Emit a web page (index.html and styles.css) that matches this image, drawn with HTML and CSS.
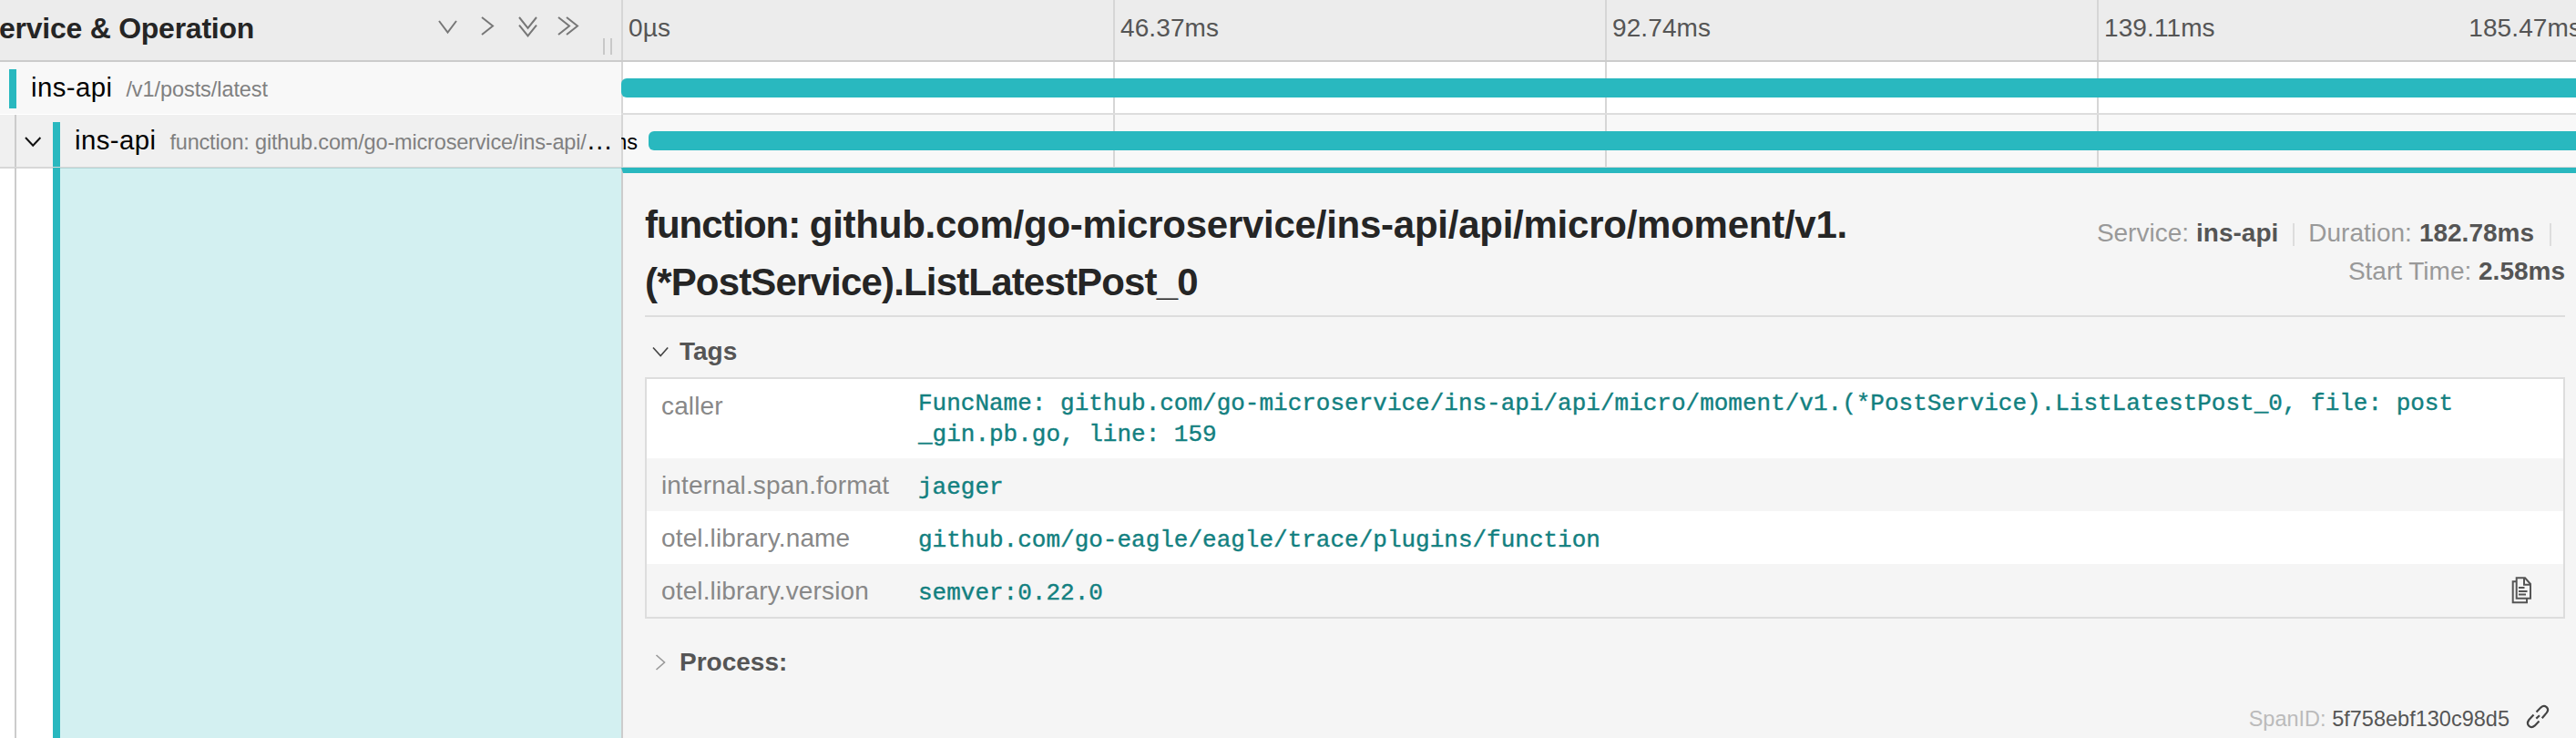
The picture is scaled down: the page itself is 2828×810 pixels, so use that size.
FILE: index.html
```html
<!DOCTYPE html>
<html lang="en">
<head>
<meta charset="utf-8">
<title>Trace timeline</title>
<link rel="stylesheet" href="styles.css">
</head>
<body>
<header class="row header">
  <div class="name-col header-name">
    <h3 class="header-title">ervice &amp; Operation</h3>
    <div class="collapsers">
      <svg class="icon" width="24" height="28"><path d="M2 6L11.5 18.5L21 6"/></svg>
      <svg class="icon" width="24" height="28"><path d="M5 2L17 11.5L5 21"/></svg>
      <svg class="icon" width="24" height="28"><path d="M2 2L11.5 13.8L21 2M2 10.7L11.5 22.5L21 10.7"/></svg>
      <svg class="icon" width="24" height="28"><path d="M1 2L13 11.5L1 21M10 2L22 11.5L10 21"/></svg>
    </div>
    <div class="grip"></div>
  </div>
  <div class="ticks">
    <div class="tick">0µs</div>
    <div class="tick">46.37ms</div>
    <div class="tick">92.74ms</div>
    <div class="tick tick-last"><span>139.11ms</span><span>185.47ms</span></div>
  </div>
</header>

<div class="row span-row">
  <div class="name-col span-name root">
    <i class="swatch"></i>
    <span class="label"><span class="service">ins-api</span><small class="endpoint path">/v1/posts/latest</small></span>
  </div>
  <div class="ticks view">
    <div class="tick"></div><div class="tick"></div><div class="tick"></div><div class="tick"></div>
    <div class="bar"></div>
  </div>
</div>

<div class="row span-row selected">
  <div class="name-col span-name">
    <i class="guide"></i>
    <svg class="icon toggle" width="20" height="20"><path d="M2 5L10.2 13.8L18.4 5"/></svg>
    <i class="swatch"></i>
    <span class="label"><span class="service">ins-api</span><small class="endpoint">function: github.com/go-microservice/ins-api/</small>…</span>
  </div>
  <div class="ticks view">
    <div class="tick"></div><div class="tick"></div><div class="tick"></div><div class="tick"></div>
    <div class="bar child"><span class="bar-label">182.78ms</span></div>
  </div>
</div>

<div class="row detail-row">
  <div class="name-col detail-gutter">
    <i class="guide"></i>
    <i class="swatch"></i>
    <div class="tint"></div>
  </div>
  <main class="detail">
    <div class="detail-head">
      <h2 class="detail-title"><span class="title-kind">function: </span><span class="title-a">github.com/go-microservice/ins-api/api/micro/moment/v1.</span><br><span class="title-b">(*PostService).ListLatestPost_0</span></h2>
      <div class="summary">
        <div class="summary-line first">
          <div class="item"><span>Service:</span> <strong>ins-api</strong></div>
          <div class="item"><span>Duration:</span> <strong>182.78ms</strong></div>
        </div>
        <div class="summary-line"><div>Start Time: <strong>2.58ms</strong></div></div>
      </div>
    </div>

    <div class="section tags">
      <svg class="icon dark" width="20" height="20"><path d="M2 5.5L10.2 14.5L18.2 5.5"/></svg>
      <strong>Tags</strong>
    </div>
    <div class="table">
      <div class="tr tall"><div class="key">caller</div><div class="value">FuncName: github.com/go-microservice/ins-api/api/micro/moment/v1.(*PostService).ListLatestPost_0, file: post<br>_gin.pb.go, line: 159</div></div>
      <div class="tr"><div class="key">internal.span.format</div><div class="value">jaeger</div></div>
      <div class="tr"><div class="key">otel.library.name</div><div class="value">github.com/go-eagle/eagle/trace/plugins/function</div></div>
      <div class="tr"><div class="key">otel.library.version</div><div class="value">semver:0.22.0</div>
        <svg class="icon copy" width="24" height="30"><path d="M5.7 1.3H15L21 8V23.8H5.7ZM14 1.3V8.8H21M8 12H14.5M8 16H17.5M8 19.5H16M5.7 5.2H1.7V28.2H17V24"/></svg>
      </div>
    </div>

    <div class="section process">
      <svg class="icon" width="20" height="20"><path d="M5.5 2L14.5 10L5.5 18"/></svg>
      <strong>Process:</strong>
    </div>

    <div class="debug">
      <span><span class="debug-label">SpanID:</span> 5f758ebf130c98d5</span>
      <svg class="icon link" width="28" height="28"><path d="M12.5 9.5L17.3 4.6C22 .5 27.5 5.5 23.7 10.4L18.7 16.2M9.5 12.5L4.4 18C.5 23.5 6 28.5 10.8 24.4L15.5 19.4M12.3 16.6L16 13.2"/></svg>
    </div>
  </main>
</div>
</body>
</html>
```
FILE: styles.css
```css
* { box-sizing: border-box; }

body {
  margin: 0;
  width: 2828px;
  height: 810px;
  overflow: hidden;
  background: #fff;
  color: #000;
  font-family: "Liberation Sans", Arial, sans-serif;
  font-size: 28px;
}

h2, h3 { margin: 0; }

.icon {
  flex: none;
  fill: none;
  stroke: #777;
  stroke-width: 2;
}

.row { display: flex; }

.name-col {
  flex: none;
  width: 682px;
  display: flex;
}

/* Header */
.header {
  height: 68px;
  background: #ececec;
  border-bottom: 2px solid #ccc;
}

.header-name {
  position: relative;
  align-items: center;
  justify-content: space-between;
  padding: 0 46px 4px 0;
}

.header-title {
  margin-left: -1px;
  font-size: 32px;
  letter-spacing: -0.25px;
  color: #252525;
}

.collapsers { display: flex; gap: 20px; }

.grip {
  position: absolute;
  right: 10px;
  bottom: 6px;
  width: 10px;
  height: 18px;
  border: solid #c8c8c8;
  border-width: 0 2px;
}

.ticks {
  flex: none;
  width: 2160px;
  display: grid;
  grid-template-columns: repeat(4, 1fr);
}

.tick {
  display: flex;
  align-items: center;
  border-left: 2px solid #d6d6d6;
}

.header .tick {
  padding: 0 8px 5px 6px;
  letter-spacing: 0.1px;
  color: #555;
}

.tick-last { justify-content: space-between; }

/* Span rows */
.span-row { height: 58px; }

.span-name {
  background: #f0f0f0;
  border-bottom: 1px solid #d8d8d8;
}

.root {
  padding-left: 10px;
  background: #f8f8f8;
  border-bottom-color: #fff;
}

.swatch {
  flex: none;
  width: 8px;
  background: #29b8bf;
}

.span-name .swatch { margin-top: 8px; }
.root .swatch { margin-bottom: 6px; }

.label {
  padding: 0 0 1px 16px;
  font-size: 29.4px;
  line-height: 56px;
  white-space: nowrap;
}

.service { letter-spacing: 0.4px; }

.endpoint {
  margin-left: 15px;
  font-size: 23.52px;
  letter-spacing: -0.18px;
  color: #808080;
}

.path { letter-spacing: -0.08px; }

.guide {
  flex: none;
  width: 2px;
  margin-left: 16px;
  background: #ccc;
}

.toggle {
  margin: 20px 12px 0 8px;
  stroke: #111;
}

.view {
  position: relative;
  overflow: hidden;
  border-bottom: 2px solid #ddd;
}

.selected .view {
  background: #f8f8f8;
  border-bottom: 1px solid #d8d8d8;
}

.bar {
  position: absolute;
  top: 18px;
  left: 0;
  right: 0;
  height: 21px;
  border-radius: 6px;
  background: #29b8bf;
}

.child { left: 30px; right: 1px; }

.bar-label {
  position: absolute;
  right: 100%;
  top: 0;
  padding-right: 12px;
  font-size: 23.52px;
  line-height: 24px;
}

/* Expanded span */
.detail-row { height: 626px; }

.detail-gutter { box-shadow: inset 0 1px #d8d8d8; }

.detail-gutter .swatch { margin-left: 40px; }

.tint {
  flex: 1;
  background: #d3f0f1;
  border-top: 1px solid #b3d6d6;
}

.detail {
  flex: 1;
  padding: 25px 12px 0 24px;
  background: #f5f5f5;
  border-top: 6px solid #29b8bf;
  border-left: 2px solid #ccc;
}

.detail-head {
  display: flex;
  justify-content: space-between;
  height: 133px;
  border-bottom: 2px solid #ddd;
}

.detail-title {
  font-size: 42px;
  line-height: 63px;
  color: #252525;
  white-space: nowrap;
}

.title-kind { letter-spacing: -1.05px; }
.title-a { letter-spacing: -0.25px; }
.title-b { letter-spacing: -0.83px; }

.summary {
  padding-top: 20px;
  line-height: 42px;
  color: #999;
}

.summary strong { color: #555; }

.summary-line {
  display: flex;
  justify-content: flex-end;
}

.first { padding-right: 15px; }

.item {
  display: flex;
  gap: 8px;
  align-items: center;
  padding-right: 18px;
  background: linear-gradient(#ddd, #ddd) right 10px / 2px 25px no-repeat;
}

.item + .item { padding-left: 15px; padding-right: 19px; }

.section {
  display: flex;
  align-items: center;
  gap: 11px;
  height: 42px;
  padding-left: 7px;
  line-height: 42px;
  color: #555;
}

.tags { margin: 17px 0 7px; }
.process { margin-top: 27px; }
.dark { stroke: #444; stroke-width: 1.6; }
.process .icon { stroke: #999; stroke-width: 1.6; }

.table { border: 2px solid #ddd; }

.tr {
  display: flex;
  height: 58px;
  background: #fff;
}

.tr:nth-child(even) { background: #f5f5f5; }
.tall { height: 87px; }

.key {
  width: 298px;
  padding: 11px 0 0 16px;
  line-height: 38px;
  letter-spacing: 0.14px;
  color: #888;
}

.value {
  flex: 1;
  padding-top: 15px;
  font-family: "Liberation Mono", "Courier New", monospace;
  font-size: 26px;
  line-height: 34px;
  color: #128080;
  -webkit-text-stroke: 0.4px #128080;
}

.tall .value { padding-top: 10px; }

.copy {
  margin: 14px 33px 0 0;
  stroke: #555;
}

.debug {
  display: flex;
  justify-content: flex-end;
  align-items: center;
  gap: 17px;
  height: 36px;
  margin-top: 23px;
  padding-right: 16px;
  font-size: 23.52px;
  color: #555;
}

.debug-label { color: #bbb; }
.link { margin-top: -6px; stroke: #444; stroke-width: 2.2; }
```
